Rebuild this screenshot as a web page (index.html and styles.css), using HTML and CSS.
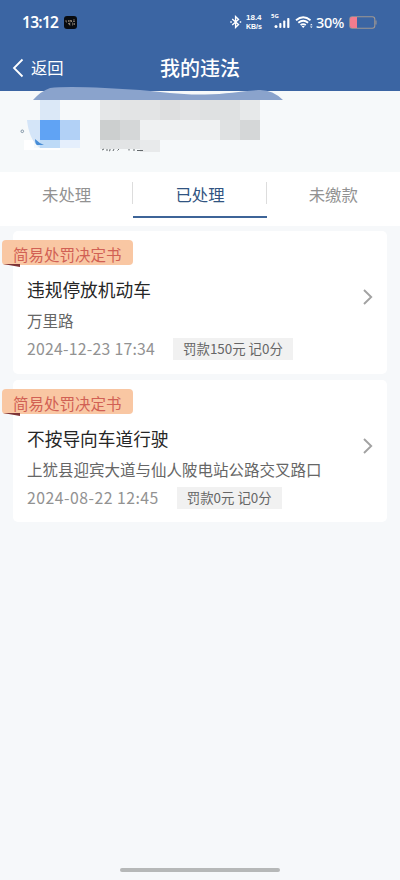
FILE: index.html
```html
<!DOCTYPE html>
<html lang="zh-CN">
<head>
<meta charset="utf-8">
<title>我的违法</title>
<link rel="stylesheet" href="styles.css">
</head>
<body>
<header class="header">
  <div class="status">
    <span class="clock">13:12</span>
    <svg class="app" width="13" height="13" viewBox="0 0 13 13"><rect width="13" height="13" rx="3" fill="#080b10"/><path d="M2 4v2h1M4.500 4v2M6 6V4l1.500 2V4M9 4h2M9 5.500h2M4 7.500h1v1M6.500 7h-1v2h1M8 7h1v2H8M10.500 7v2" fill="none" stroke="#b8aa96" stroke-width=".6"/></svg>
    <svg class="bluetooth" width="12" height="14" viewBox="0 0 12 14" fill="none" stroke="#fff" stroke-width="1.400"><path d="M2.200 4l6.300 5.500L5.600 12.400V1.600L8.500 4.500 2.200 10"/><path d="M.3 7h1.500M9.700 7h1.500"/></svg>
    <span class="speed"><span>18.4</span><span>KB/s</span></span>
    <span class="signal"><small>5G</small><svg width="20" height="14" viewBox="0 0 20 14" fill="#fff"><circle cx="5" cy="11.500" r="1.500"/><rect x="8.300" y="8" width="2.100" height="5" rx=".8"/><rect x="12.200" y="5.500" width="2.100" height="7.500" rx=".8"/><rect x="16.200" y="3" width="2.200" height="10" rx=".8"/></svg></span>
    <svg class="wifi" width="19" height="14" viewBox="0 0 19 14"><path d="M1 5.200Q8.200-.8 15.500 5.200M3.300 7.800q4.900-3.900 9.800 0M5.600 10.100q2.600-1.900 5.200 0" fill="none" stroke="#fff" stroke-width="1.900"/><path d="M6.600 11.200q1.600-1 3.200 0L8.200 13zM15 10.200l1.300-1.500 1.300 1.500zM15 11.400h2.600l-1.300 1.500z" fill="#fff"/></svg>
    <span class="percent">30%</span>
    <svg class="battery" width="28" height="13" viewBox="0 0 28 13"><rect x=".8" y=".8" width="25" height="11.400" rx="2.500" fill="none" stroke="#a09893" stroke-width="1.100"/><path d="M3 1h5v11H3Q1 12 1 9.500V3Q1 1 3 1z" fill="#f37c8e"/><path d="M27 4.500v4" stroke="#a09893"/></svg>
  </div>
  <nav class="nav">
    <a class="back"><svg width="12" height="20" viewBox="0 0 12 20"><path d="M10.500 1.500L2 10l8.500 8.500" fill="none" stroke="#fff" stroke-width="1.800"/></svg><span>返回</span></a>
    <h1>我的违法</h1>
  </nav>
</header>
<section class="profile">
  <svg class="mosaic" width="400" height="86" viewBox="0 0 400 86">
    <path d="M33 14Q41 5 50 2Q66 0 105 2L140 4C164 6 180 9 205 8.500C226 8 242 5 258 4Q272 3 283 14z" fill="#8aa3cc"/>
    <path d="M24 54h10v8h26v2H24z" fill="#fff"/>
    <path d="M27 34h13v28Q29 54 27 34z" fill="#d4e5f8"/>
    <rect x="40" y="14" width="20" height="20" fill="#dbe8f7"/><rect x="40" y="34" width="20" height="20" fill="#60a3f4"/><rect x="60" y="34" width="20" height="20" fill="#b2d1f6"/><rect x="40" y="54" width="20" height="8" fill="#bddaf7"/><rect x="60" y="54" width="20" height="8" fill="#e5effc"/>
    <path d="M35 53q4 4 9 6h-7q-2-1-2-6z" fill="#488dd6"/><circle cx="22.300" cy="45.300" r="1.300" fill="none" stroke="#8295a6"/>
    <rect x="100" y="14" width="20" height="20" fill="#e5e7e8"/><rect x="120" y="14" width="40" height="20" fill="#e3e4e5"/><rect x="160" y="14" width="20" height="20" fill="#dedfe0"/><rect x="180" y="14" width="20" height="20" fill="#e2e3e4"/><rect x="200" y="14" width="40" height="20" fill="#dfe1e2"/><rect x="240" y="14" width="20" height="20" fill="#e7e9ea"/>
    <rect x="100" y="34" width="20" height="20" fill="#cccfcf"/><rect x="120" y="34" width="20" height="20" fill="#d5d7d8"/><rect x="140" y="34" width="80" height="20" fill="#eff1f2"/><rect x="220" y="34" width="20" height="20" fill="#e0e2e3"/><rect x="240" y="34" width="20" height="20" fill="#d5d7d8"/>
    <rect x="100" y="54" width="40" height="9" fill="#e2e4e5"/><rect x="140" y="54" width="20" height="12" fill="#e8eaeb"/>
    <path d="M102 64l2-1M107 63v2M110 63v1.500l-1 .5M114 63l-1 2M119 63l-1.500 1.500M129 63v1.500M133 64h2M137 64.500h6" fill="none" stroke="#63686b"/>
  </svg>
</section>
<nav class="tabs"><a>未处理</a><a class="active">已处理</a><a>未缴款</a></nav>
<main class="list">
  <article class="card">
    <div class="ribbon">简易处罚决定书<svg width="19" height="3" viewBox="0 0 19 3"><path d="M1 0h17v3z" fill="#7e3436"/></svg></div>
    <div class="content"><h2>违规停放机动车</h2><p>万里路</p><div class="meta"><time>2024-12-23 17:34</time><span class="fine">罚款150元 记0分</span></div></div>
    <svg class="chevron" width="12" height="18" viewBox="0 0 12 18"><path d="M2 2l7.200 7L2 16" fill="none" stroke="#a2a2a2" stroke-width="1.900"/></svg>
  </article>
  <article class="card">
    <div class="ribbon">简易处罚决定书<svg width="19" height="3" viewBox="0 0 19 3"><path d="M1 0h17v3z" fill="#7e3436"/></svg></div>
    <div class="content"><h2>不按导向车道行驶</h2><p>上犹县迎宾大道与仙人陂电站公路交叉路口</p><div class="meta"><time class="wide">2024-08-22 12:45</time><span class="fine">罚款0元 记0分</span></div></div>
    <svg class="chevron" width="12" height="18" viewBox="0 0 12 18"><path d="M2 2l7.200 7L2 16" fill="none" stroke="#a2a2a2" stroke-width="1.900"/></svg>
  </article>
</main>
<footer class="home"><span></span></footer>
</body>
</html>
```
FILE: styles.css
```css
* { box-sizing: border-box; }
body { margin: 0; width: 400px; height: 880px; overflow: hidden; display: flex; flex-direction: column; background: #f6f8fa; font-family: "Noto Sans CJK SC", sans-serif; }
h1, h2, p { margin: 0; font-weight: 400; }
svg { display: block; flex: none; }
.header { height: 91px; flex: none; background: #3b65a3; color: #fff; }
.status { height: 44px; display: flex; align-items: center; padding-left: 22px; font-family: "Noto Sans", sans-serif; }
.clock { width: 37px; font-size: 15.500px; font-weight: 600; letter-spacing: -.7px; white-space: nowrap; }
.app { margin-left: 5px; }
.bluetooth { margin-left: 153px; }
.speed { width: 18px; margin-left: 4px; display: flex; flex-direction: column; gap: 1px; font-family: "Liberation Sans", sans-serif; font-size: 8px; line-height: 8px; font-weight: 700; white-space: nowrap; }
.speed span { display: block; }
.speed span + span { font-size: 7px; }
.signal { margin-left: 7px; display: flex; position: relative; width: 20px; }
.signal small { position: absolute; left: 0; top: -2px; font-size: 6px; line-height: 6px; font-weight: 700; }
.wifi { margin-left: 4px; }
.percent { width: 29px; margin-left: 2px; font-size: 14.500px; font-weight: 500; letter-spacing: -.3px; white-space: nowrap; }
.battery { margin-left: 4px; }
.nav { height: 47px; display: grid; grid-template-columns: 1fr auto 1fr; align-items: center; }
.back { display: flex; align-items: center; gap: 7px; padding-left: 12px; font-size: 16.300px; line-height: 24px; }
.back span { margin-top: -2px; }
.nav h1 { font-size: 20px; line-height: 30px; font-weight: 500; }
.profile { height: 81px; flex: none; background: #f6f9fa; }
.mosaic { margin-top: -5px; position: relative; }
.tabs { height: 54px; flex: none; display: grid; grid-template-columns: repeat(3, 1fr); background: #fff; }
.tabs a { height: 46px; display: flex; align-items: center; justify-content: center; padding-bottom: 2px; font-size: 16.400px; color: #929292; background: linear-gradient(#ddd, #ddd) right 10px / 1px 22px no-repeat; }
.tabs a:last-child { background: none; }
.tabs .active { color: #315481; border-bottom: 2px solid #3d6498; padding: 0; }
.list { padding: 5px 13px 0; display: flex; flex-direction: column; gap: 6px; flex: 1; }
.card { height: 142.500px; background: #fff; border-radius: 5px; display: grid; grid-template-columns: 1fr 26px; grid-template-rows: 35px 1fr; }
.ribbon { grid-column: 1 / -1; width: 131px; height: 25px; margin: 9px 0 0 -11px; padding-left: 11px; border-radius: 4px; background: #f9c7a3; color: #d16054; font-size: 15.500px; line-height: 29px; white-space: nowrap; position: relative; }
.ribbon svg { position: absolute; left: 0; bottom: -2px; }
.content { padding: 7px 0 0 14px; }
.content h2 { font-size: 17.700px; line-height: 32px; color: #262626; }
.content p { font-size: 15.500px; line-height: 31px; color: #666; white-space: nowrap; }
.meta { display: flex; align-items: center; gap: 18px; height: 24px; margin-top: 1px; white-space: nowrap; }
.meta time { font-size: 15.800px; line-height: 24px; letter-spacing: .25px; color: #929292; }
.meta .wide { letter-spacing: .48px; }
.fine { height: 22px; padding: 0 10px; background: #f1f1f1; color: #666; font-size: 13.400px; line-height: 21px; }
.chevron { margin: 22px 0 0 1px; }
.home { height: 14px; flex: none; display: flex; justify-content: center; }
.home span { width: 160px; height: 4px; margin-top: 2px; border-radius: 2px; background: #b6b8b8; }
```
